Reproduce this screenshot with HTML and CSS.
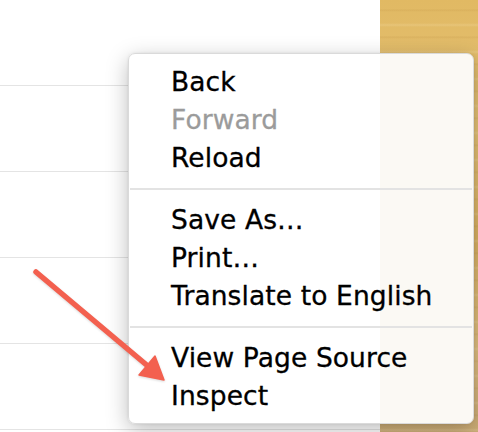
FILE: index.html
```html
<!DOCTYPE html>
<html>
<head>
<meta charset="utf-8">
<link rel="stylesheet" href="styles.css">
</head>
<body>
<div class="screen">
  <div class="page">
    <div class="row"></div>
    <div class="row"></div>
    <div class="row"></div>
    <div class="row"></div>
    <div class="row"></div>
  </div>
  <div class="wood"></div>

  <div class="menu">
    <div class="group">
      <div class="item">Back</div>
      <div class="item disabled">Forward</div>
      <div class="item">Reload</div>
    </div>
    <div class="sep"></div>
    <div class="group">
      <div class="item">Save As…</div>
      <div class="item">Print…</div>
      <div class="item">Translate to English</div>
    </div>
    <div class="sep"></div>
    <div class="group">
      <div class="item">View Page Source</div>
      <div class="item">Inspect</div>
    </div>
  </div>

  <svg class="arrow" width="478" height="432" viewBox="0 0 478 432">
    <line x1="36" y1="272" x2="149" y2="367" stroke="#f3604f" stroke-width="5.5" stroke-linecap="round"/>
    <polygon points="164,380 139,375 155,356" fill="#f3604f" stroke="#f3604f" stroke-width="1.5" stroke-linejoin="round"/>
  </svg>
</div>
</body>
</html>
```

FILE: styles.css
```css
html, body {
  margin: 0;
  padding: 0;
  background: #ffffff;
}

.screen {
  position: relative;
  width: 478px;
  height: 432px;
  overflow: hidden;
  display: flex;
  font-family: "DejaVu Sans", "Liberation Sans", sans-serif;
}

.page {
  width: 380px;
  flex: none;
  background: #ffffff;
  display: flex;
  flex-direction: column;
}

.row {
  height: 85px;
  flex: none;
  border-bottom: 1px solid #e4e4e4;
}

.wood {
  flex: 1;
  background:
    repeating-linear-gradient(180deg,
      rgba(150, 100, 30, 0) 0px,
      rgba(150, 100, 30, 0) 9px,
      rgba(150, 100, 30, 0.10) 10px,
      rgba(150, 100, 30, 0) 12px,
      rgba(150, 100, 30, 0) 23px,
      rgba(255, 240, 200, 0.18) 25px,
      rgba(150, 100, 30, 0) 27px),
    linear-gradient(180deg, #e1b963 0%, #e5c276 30%, #dab263 55%, #e0bf80 80%, #cdad76 100%);
}

.menu {
  position: absolute;
  left: 128px;
  top: 53px;
  width: 344px;
  padding: 9px 0 8px;
  border: 1px solid #dadada;
  border-radius: 7px;
  background: linear-gradient(90deg, #ffffff 0, #ffffff 251px, #fbf9f4 251px, #fbf9f4 100%);
  box-shadow: 0 6px 22px rgba(0, 0, 0, 0.26), 0 0 3px rgba(0, 0, 0, 0.08);
}

.item {
  padding-left: 42px;
  font-size: 26.5px;
  letter-spacing: 0.1px;
  line-height: 38px;
  height: 38px;
  color: #000000;
  white-space: nowrap;
  -webkit-text-stroke: 0.3px currentColor;
}

.item.disabled {
  color: #9b9b9b;
}

.sep {
  height: 2px;
  margin: 11px 1px 11px 1px;
  background: #e3e3e3;
}

.arrow {
  position: absolute;
  left: 0;
  top: 0;
  filter: drop-shadow(0 1px 1px rgba(0, 0, 0, 0.15));
}
```
